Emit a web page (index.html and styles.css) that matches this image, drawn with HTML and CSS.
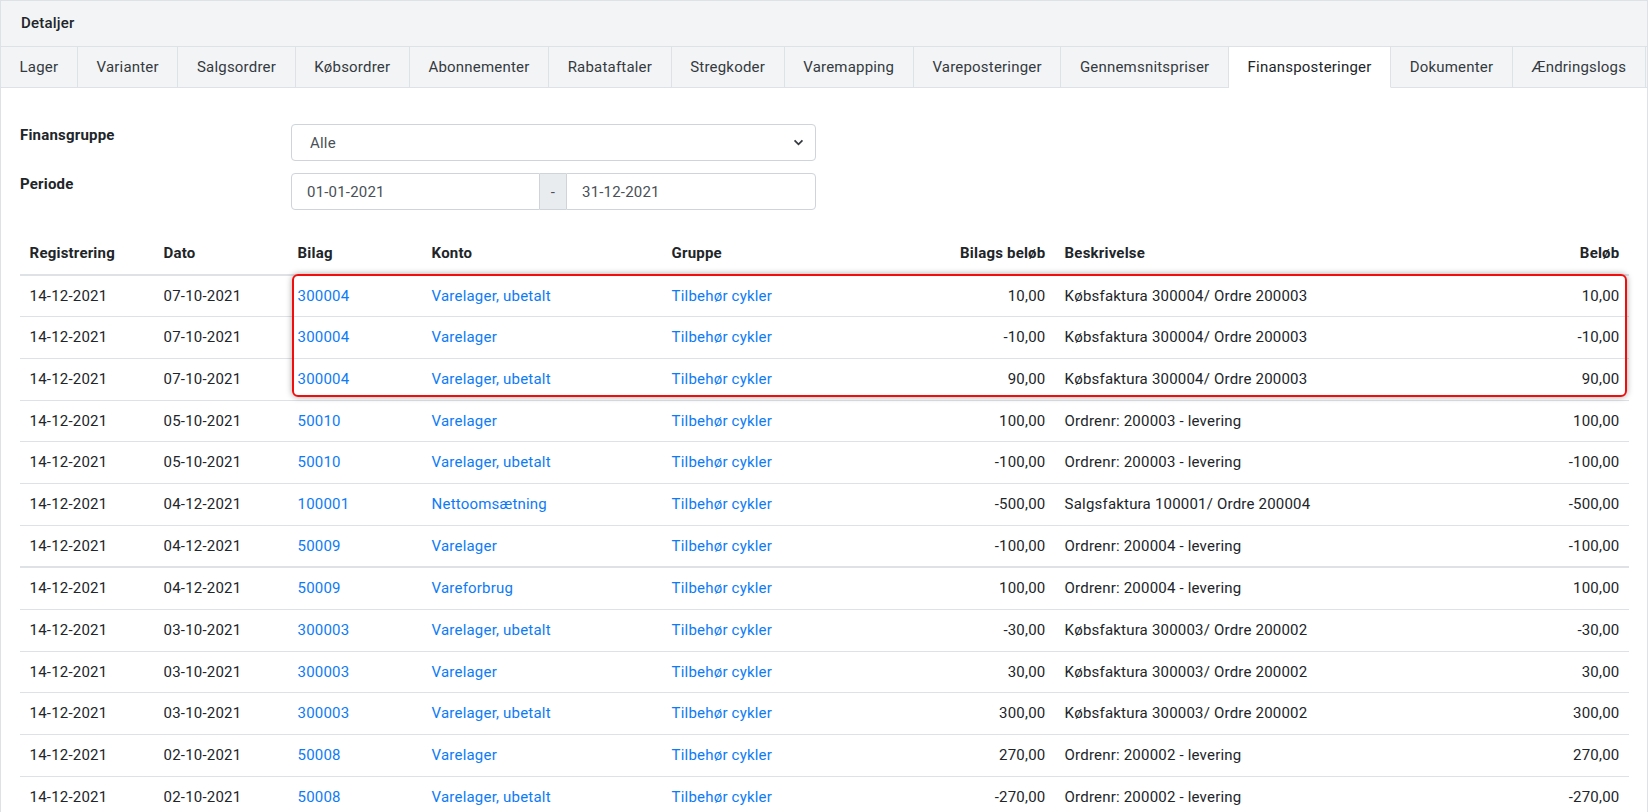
FILE: index.html
```html
<!DOCTYPE html>
<html lang="da">
<head>
<meta charset="utf-8">
<title>Detaljer</title>
<link rel="stylesheet" href="styles.css">
</head>
<body>
<div class="card">
  <div class="card-header">Detaljer</div>
  <ul class="tabs">
    <li class="tab">Lager</li>
    <li class="tab">Varianter</li>
    <li class="tab">Salgsordrer</li>
    <li class="tab">Købsordrer</li>
    <li class="tab">Abonnementer</li>
    <li class="tab">Rabataftaler</li>
    <li class="tab">Stregkoder</li>
    <li class="tab">Varemapping</li>
    <li class="tab">Vareposteringer</li>
    <li class="tab">Gennemsnitspriser</li>
    <li class="tab active">Finansposteringer</li>
    <li class="tab">Dokumenter</li>
    <li class="tab">Ændringslogs</li>
  </ul>
  <div class="card-body">
    <div class="filters">
      <div class="label">Finansgruppe</div>
      <div class="select">
        <span>Alle</span>
        <svg class="chevron" width="12" height="8" viewBox="0 0 12 8"><path d="M1.5 1.5 L6 6 L10.5 1.5" fill="none" stroke="#343a40" stroke-width="2"/></svg>
      </div>
      <div class="label">Periode</div>
      <div class="daterange">
        <div class="date first">01-01-2021</div>
        <div class="addon">-</div>
        <div class="date last">31-12-2021</div>
      </div>
    </div>

    <div class="table-wrap">
      <table class="ledger">
        <colgroup>
          <col class="c-reg"><col class="c-dato"><col class="c-bilag"><col class="c-konto"><col class="c-gruppe"><col class="c-bbelob"><col class="c-besk"><col class="c-belob">
        </colgroup>
        <thead>
          <tr>
            <th>Registrering</th><th>Dato</th><th>Bilag</th><th>Konto</th><th>Gruppe</th><th class="num">Bilags beløb</th><th>Beskrivelse</th><th class="num">Beløb</th>
          </tr>
        </thead>
        <tbody>
          <tr><td>14-12-2021</td><td>07-10-2021</td><td><a>300004</a></td><td><a>Varelager, ubetalt</a></td><td><a>Tilbehør cykler</a></td><td class="num">10,00</td><td>Købsfaktura 300004/ Ordre 200003</td><td class="num">10,00</td></tr>
          <tr><td>14-12-2021</td><td>07-10-2021</td><td><a>300004</a></td><td><a>Varelager</a></td><td><a>Tilbehør cykler</a></td><td class="num">-10,00</td><td>Købsfaktura 300004/ Ordre 200003</td><td class="num">-10,00</td></tr>
          <tr><td>14-12-2021</td><td>07-10-2021</td><td><a>300004</a></td><td><a>Varelager, ubetalt</a></td><td><a>Tilbehør cykler</a></td><td class="num">90,00</td><td>Købsfaktura 300004/ Ordre 200003</td><td class="num">90,00</td></tr>
          <tr><td>14-12-2021</td><td>05-10-2021</td><td><a>50010</a></td><td><a>Varelager</a></td><td><a>Tilbehør cykler</a></td><td class="num">100,00</td><td>Ordrenr: 200003 - levering</td><td class="num">100,00</td></tr>
          <tr><td>14-12-2021</td><td>05-10-2021</td><td><a>50010</a></td><td><a>Varelager, ubetalt</a></td><td><a>Tilbehør cykler</a></td><td class="num">-100,00</td><td>Ordrenr: 200003 - levering</td><td class="num">-100,00</td></tr>
          <tr><td>14-12-2021</td><td>04-12-2021</td><td><a>100001</a></td><td><a>Nettoomsætning</a></td><td><a>Tilbehør cykler</a></td><td class="num">-500,00</td><td>Salgsfaktura 100001/ Ordre 200004</td><td class="num">-500,00</td></tr>
          <tr><td>14-12-2021</td><td>04-12-2021</td><td><a>50009</a></td><td><a>Varelager</a></td><td><a>Tilbehør cykler</a></td><td class="num">-100,00</td><td>Ordrenr: 200004 - levering</td><td class="num">-100,00</td></tr>
        </tbody>
        <tbody class="group">
          <tr><td>14-12-2021</td><td>04-12-2021</td><td><a>50009</a></td><td><a>Vareforbrug</a></td><td><a>Tilbehør cykler</a></td><td class="num">100,00</td><td>Ordrenr: 200004 - levering</td><td class="num">100,00</td></tr>
          <tr><td>14-12-2021</td><td>03-10-2021</td><td><a>300003</a></td><td><a>Varelager, ubetalt</a></td><td><a>Tilbehør cykler</a></td><td class="num">-30,00</td><td>Købsfaktura 300003/ Ordre 200002</td><td class="num">-30,00</td></tr>
          <tr><td>14-12-2021</td><td>03-10-2021</td><td><a>300003</a></td><td><a>Varelager</a></td><td><a>Tilbehør cykler</a></td><td class="num">30,00</td><td>Købsfaktura 300003/ Ordre 200002</td><td class="num">30,00</td></tr>
          <tr><td>14-12-2021</td><td>03-10-2021</td><td><a>300003</a></td><td><a>Varelager, ubetalt</a></td><td><a>Tilbehør cykler</a></td><td class="num">300,00</td><td>Købsfaktura 300003/ Ordre 200002</td><td class="num">300,00</td></tr>
          <tr><td>14-12-2021</td><td>02-10-2021</td><td><a>50008</a></td><td><a>Varelager</a></td><td><a>Tilbehør cykler</a></td><td class="num">270,00</td><td>Ordrenr: 200002 - levering</td><td class="num">270,00</td></tr>
          <tr><td>14-12-2021</td><td>02-10-2021</td><td><a>50008</a></td><td><a>Varelager, ubetalt</a></td><td><a>Tilbehør cykler</a></td><td class="num">-270,00</td><td>Ordrenr: 200002 - levering</td><td class="num">-270,00</td></tr>
        </tbody>
      </table>
      <div class="highlight"></div>
    </div>
  </div>
</div>
</body>
</html>
```

FILE: styles.css
```css
html, body {
  margin: 0;
  padding: 0;
  overflow: hidden;
  background: #fff;
}

body {
  font-family: Roboto, "Noto Sans", "Liberation Sans", sans-serif;
  font-size: 15px;
  line-height: 1.5;
  letter-spacing: 0.2px;
  color: #212529;
}

.card {
  border: 1px solid #dee2e6;
  border-bottom: none;
  min-height: 812px;
  box-sizing: border-box;
}

.card-header {
  background: #f3f4f6;
  padding: 11px 20px;
  font-weight: 500;
  border-bottom: 1px solid #dee2e6;
}

.tabs {
  display: flex;
  margin: 0;
  padding: 0;
  list-style: none;
  background: #f3f4f6;
  border-bottom: 1px solid #dee2e6;
}

.tab {
  padding: 9px 18.6px;
  border-right: 1px solid #dee2e6;
  color: #343a40;
  white-space: nowrap;
}

.tab:first-child {
  margin-left: -1px;
  border-left: 1px solid #dee2e6;
}

.tab.active {
  background: #fff;
  margin-bottom: -1px;
  border-bottom: 1px solid #fff;
  color: #212529;
}

.card-body {
  padding: 0 19px;
}

.filters {
  display: grid;
  grid-template-columns: 271px 525px;
  row-gap: 12px;
  padding-top: 36px;
}

.label {
  font-weight: 700;
  line-height: 22px;
}

.select {
  height: 37px;
  box-sizing: border-box;
  border: 1px solid #ced4da;
  border-radius: 4px;
  display: flex;
  align-items: center;
  justify-content: space-between;
  padding: 2px 11px 0 18px;
  color: #495057;
}

.chevron {
  display: block;
  margin-top: -3px;
  width: 11px;
  height: 7px;
}

.daterange {
  display: flex;
  height: 37px;
  color: #495057;
}

.date {
  box-sizing: border-box;
  border: 1px solid #ced4da;
  display: flex;
  align-items: center;
  padding: 2px 15px 0;
}

.date.first {
  width: 249px;
  border-radius: 4px 0 0 4px;
}

.date.last {
  flex: 1;
  border-radius: 0 4px 4px 0;
}

.addon {
  width: 26px;
  box-sizing: border-box;
  background: #e9ecef;
  border-top: 1px solid #ced4da;
  border-bottom: 1px solid #ced4da;
  display: flex;
  align-items: center;
  justify-content: center;
  padding-top: 2px;
}

.table-wrap {
  position: relative;
  margin-top: 23px;
}

.ledger {
  width: 1609px;
  table-layout: fixed;
  border-collapse: collapse;
}

.c-reg, .c-dato, .c-bilag { width: 134px; }
.c-konto { width: 240px; }
.c-gruppe { width: 250px; }
.c-bbelob { width: 143px; }
.c-besk { width: 400px; }
.c-belob { width: 174px; }

.ledger th {
  text-align: left;
  font-weight: 700;
  padding: 9px 9.6px;
  border-bottom: 2px solid #dee2e6;
  white-space: nowrap;
}

.ledger td {
  padding: 9.1px 9.6px;
  border-bottom: 1px solid #dee2e6;
  white-space: nowrap;
}

.ledger .num {
  text-align: right;
}

.ledger a {
  color: #0d7bf7;
  text-decoration: none;
}

.ledger tbody.group tr:first-child td {
  border-top: 2px solid #dee2e6;
}

.highlight {
  position: absolute;
  left: 272px;
  top: 41px;
  width: 1335px;
  height: 123px;
  box-sizing: border-box;
  border: 2px solid #f20d0d;
  border-radius: 6px;
  box-shadow: 0 0 6px rgba(0, 0, 0, 0.35);
  pointer-events: none;
}
```
